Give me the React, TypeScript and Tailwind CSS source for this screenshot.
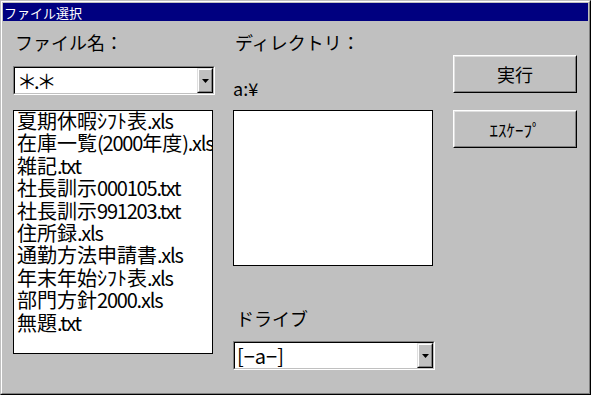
const jp = "font-['Noto_Sans_CJK_JP',sans-serif]"

const files = [
  "夏期休暇ｼﾌﾄ表.xls",
  "在庫一覧(2000年度).xls",
  "雑記.txt",
  "社長訓示000105.txt",
  "社長訓示991203.txt",
  "住所録.xls",
  "通勤方法申請書.xls",
  "年末年始ｼﾌﾄ表.xls",
  "部門方針2000.xls",
  "無題.txt",
]

// ascii runs are set tighter, the old bitmap font had narrow latin glyphs
function FileName(props: { name: string }) {
  const parts = props.name.split(/([\x20-\x7e]+)/).filter(p => p)
  return <li className="h-[22.4px] flex items-start">
    {parts.map((p, i) => /^[\x20-\x7e]+$/.test(p)
      ? <span key={i} className="leading-[20px] tracking-[-1.2px] pr-[1.2px] -mr-[1.2px]">{p}</span>
      : <span key={i} className="leading-[20px]">{p}</span>)}
  </li>
}

function DropButton() {
  return <div className="w-[16px] self-stretch border border-t-[#dfdfdf] border-l-[#dfdfdf] border-b-black border-r-black">
    <div className="h-full flex items-center justify-center bg-[#c0c0c0] border border-t-white border-l-white border-b-[#808080] border-r-[#808080]">
      <svg width="7" height="4" viewBox="0 0 7 4" className="mt-[1px]">
        <path d="M0 0h7L3.5 4z" fill="#000" />
      </svg>
    </div>
  </div>
}

function Combo(props: { text: string, textClass: string }) {
  return <div className="border border-t-[#808080] border-l-[#808080] border-b-white border-r-white">
    <div className="h-[27px] flex items-stretch bg-white border border-t-black border-l-black border-b-[#c0c0c0] border-r-[#c0c0c0]">
      <span className={`flex-1 flex items-center pl-[2px] text-black ${props.textClass}`}>{props.text}</span>
      <DropButton />
    </div>
  </div>
}

function Button(props: { label: string, size: string }) {
  return <div className="h-[38px] border border-t-white border-l-white border-b-black border-r-black">
    <div className="h-full flex items-center justify-center border border-t-[#dfdfdf] border-l-[#dfdfdf] border-b-[#808080] border-r-[#808080]">
      <span className={`${jp} ${props.size} leading-none text-black`}>{props.label}</span>
    </div>
  </div>
}

export default function App() {
  return <div className="w-[591px] h-[395px] border border-t-[#c0c0c0] border-l-[#c0c0c0] border-b-black border-r-black bg-[#c0c0c0]">
    <div className="h-full flex flex-col p-[1px] border border-t-white border-l-white border-b-[#808080] border-r-[#808080]">
      <div className={`h-[18px] flex items-center pl-[1px] bg-[#000080] text-white text-[13px] leading-none ${jp}`}>
        ファイル選択
      </div>

      <div className={`flex pl-[10px] gap-[18px] ${jp}`}>
        <div className="w-[202px] flex flex-col">
          <div className="mt-[9px] h-[24px] pl-[2px] text-[18px] leading-[24px] text-black">ファイル名：</div>
          <div className="mt-[12px]">
            <Combo text="＊.＊" textClass="text-[20px] tracking-[-3px]" />
          </div>
          <div className="mt-[15px] w-[200px] h-[244px] bg-white border border-black overflow-hidden">
            <ul className="pl-[3px] text-[20px] text-black whitespace-nowrap">
              {files.map(f => <FileName key={f} name={f} />)}
            </ul>
          </div>
        </div>

        <div className="w-[202px] flex flex-col">
          <div className="mt-[9px] h-[24px] pl-[2px] text-[18px] leading-[24px] text-black">ディレクトリ：</div>
          <div className="mt-[22px] h-[24px] text-[18px] leading-[24px] text-black">a:¥</div>
          <div className="mt-[10px] w-[200px] h-[156px] bg-white border border-black" />
          <div className="mt-[40px] h-[24px] pl-[3px] text-[18px] leading-[24px] text-black">ドライブ</div>
          <div className="mt-[11px]">
            <Combo text="[−a−]" textClass="text-[20px]" />
          </div>
        </div>

        <div className="w-[124px] flex flex-col">
          <div className="mt-[34px]">
            <Button label="実行" size="text-[18px]" />
          </div>
          <div className="mt-[17px]">
            <Button label="ｴｽｹｰﾌﾟ" size="text-[17px]" />
          </div>
        </div>
      </div>
    </div>
  </div>
}
